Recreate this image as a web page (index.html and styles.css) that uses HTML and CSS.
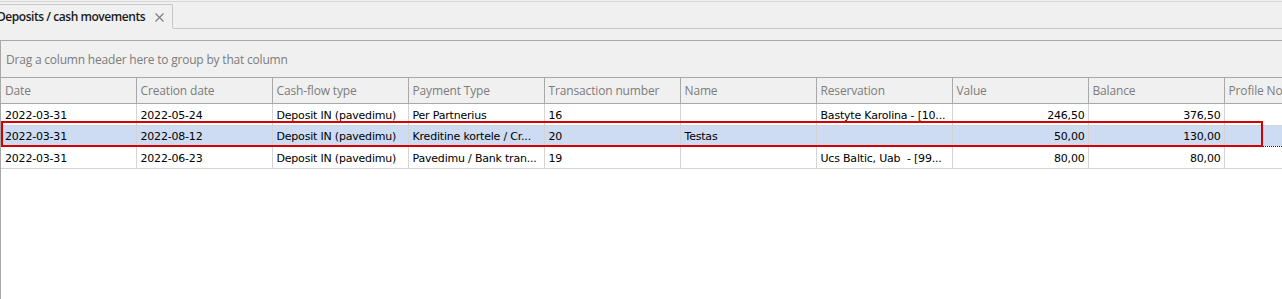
FILE: index.html
```html
<!DOCTYPE html>
<html lang="en">
<head>
  <meta charset="UTF-8" />
  <title>Deposits / cash movements</title>
  <link rel="stylesheet" href="styles.css">
</head>
<body>
  <div class="tabstrip">
    <div class="tab">
      <span class="tab-title">Deposits / cash movements</span>
      <span class="tab-close">
        <svg width="9" height="9" viewBox="0 0 9 9"><path d="M0.5 0.5 L8.5 8.5 M8.5 0.5 L0.5 8.5" stroke="#7a7a7a" stroke-width="1.1" fill="none"/></svg>
      </span>
    </div>
    <div class="tab-rest"></div>
  </div>

  <div class="grid">
    <div class="group-panel">Drag a column header here to group by that column</div>
    <table class="rows">
      <colgroup>
        <col class="first"><col><col><col><col><col><col><col><col><col>
      </colgroup>
      <thead>
        <tr>
          <th>Date</th>
          <th>Creation date</th>
          <th>Cash-flow type</th>
          <th>Payment Type</th>
          <th>Transaction number</th>
          <th>Name</th>
          <th>Reservation</th>
          <th>Value</th>
          <th>Balance</th>
          <th>Profile No</th>
        </tr>
      </thead>
      <tbody>
        <tr>
          <td>2022-03-31</td>
          <td>2022-05-24</td>
          <td>Deposit IN (pavedimu)</td>
          <td>Per Partnerius</td>
          <td>16</td>
          <td></td>
          <td>Bastyte Karolina - [10...</td>
          <td class="num">246,50</td>
          <td class="num">376,50</td>
          <td></td>
        </tr>
        <tr class="selected">
          <td>2022-03-31</td>
          <td>2022-08-12</td>
          <td>Deposit IN (pavedimu)</td>
          <td>Kreditine kortele / Cr...</td>
          <td>20</td>
          <td>Testas</td>
          <td></td>
          <td class="num">50,00</td>
          <td class="num">130,00</td>
          <td></td>
        </tr>
        <tr>
          <td>2022-03-31</td>
          <td>2022-06-23</td>
          <td>Deposit IN (pavedimu)</td>
          <td>Pavedimu / Bank tran...</td>
          <td>19</td>
          <td></td>
          <td>Ucs Baltic, Uab&nbsp; - [99...</td>
          <td class="num">80,00</td>
          <td class="num">80,00</td>
          <td></td>
        </tr>
      </tbody>
    </table>
    <div class="empty"></div>
    <!-- red highlight drawn over the selected row -->
    <div class="highlight"></div>
  </div>
</body>
</html>
```

FILE: styles.css
```css
body {
  margin: 0;
  padding: 0;
  background: #f0f0f0;
  font-family: "Open Sans", "Noto Sans", sans-serif;
  font-size: 12px;
  overflow: hidden;
  width: 1282px;
  height: 299px;
}

.tabstrip {
  display: flex;
  height: 27px;
  margin-top: 1px;
  border-top: 1px solid #d6d6d6;
  margin-bottom: 11px;
}

.tab {
  display: flex;
  align-items: center;
  gap: 10px;
  margin-left: -10px;
  margin-top: 2px;
  padding: 0 8px 0 7px;
  background: #f0f0f0;
  border-top: 1px solid #c8c8c8;
  border-right: 1px solid #c8c8c8;
  height: 23px;
}

.tab-title {
  font-weight: 600;
  font-size: 12px;
  color: #1a1a1a;
  letter-spacing: -0.45px;
}

.tab-close {
  display: flex;
  align-items: center;
  padding-top: 1px;
}

.tab-rest {
  flex: 1;
  border-bottom: 1px solid #c8c8c8;
}

.grid {
  position: relative;
  border-top: 1px solid #a8a8a8;
  border-left: 1px solid #a8a8a8;
  background: #fff;
  width: 1400px;
}

.group-panel {
  background: #f0f0f0;
  height: 36px;
  line-height: 37px;
  padding-left: 5px;
  color: #7c7c7c;
  font-size: 12px;
  letter-spacing: -0.2px;
}

.rows {
  border-collapse: collapse;
  table-layout: fixed;
  width: 1359px;
}

.rows col {
  width: 136px;
}

.rows col.first {
  width: 135px;
}

.rows th {
  height: 25px;
  background: #f0f0f0;
  border-top: 1px solid #a8a8a8;
  border-bottom: 1px solid #a8a8a8;
  border-right: 1px solid #a8a8a8;
  color: #7c7c7c;
  font-weight: normal;
  text-align: left;
  padding: 0 4px;
  white-space: nowrap;
  overflow: hidden;
  letter-spacing: -0.15px;
}

.rows td {
  height: 20px;
  padding: 1px 4px 0;
  border-right: 1px solid #d4d4d4;
  border-bottom: 1px solid #d4d4d4;
  font-family: "DejaVu Sans", sans-serif;
  font-size: 11px;
  letter-spacing: -0.2px;
  color: #000;
  white-space: nowrap;
  overflow: hidden;
}

.rows td.num {
  text-align: right;
  padding-right: 3px;
}

.rows tr.selected td {
  background: #cddcf3;
  border-top: 1px dotted #222;
  border-bottom: 1px dotted #222;
  height: 19px;
}

.empty {
  height: 140px;
  background: #fff;
}

.highlight {
  position: absolute;
  left: 0;
  top: 80px;
  width: 1258px;
  height: 22px;
  border: 2px solid #d40000;
  pointer-events: none;
}
```
